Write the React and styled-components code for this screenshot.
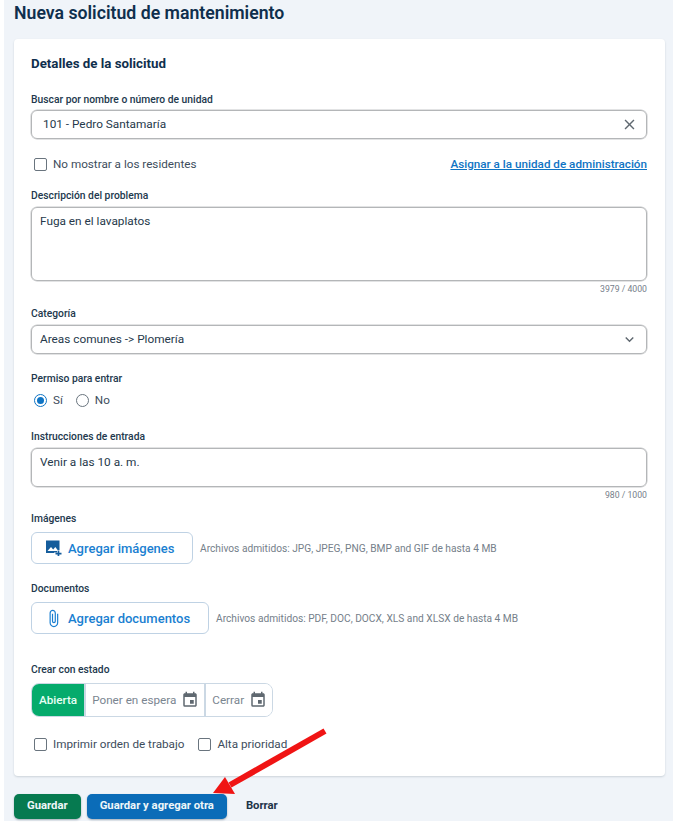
import React from 'react';
import styled, { createGlobalStyle } from 'styled-components';
import { MdAttachFile, MdClose, MdEvent, MdExpandMore } from 'react-icons/md';

const GlobalStyle = createGlobalStyle`
	html, body {
		margin: 0;
		padding: 0;
		background: #fff;
		font-family: Roboto, "Liberation Sans", sans-serif;
	}
`;

const Page = styled.div`
	position: relative;
	box-sizing: border-box;
	width: 673px;
	height: 828px;
	padding-bottom: 7px;
	padding-left: 4px;
	overflow: hidden;
`;
const Surface = styled.main`
	box-sizing: border-box;
	height: 821px;
	padding: 3px 8px 0 10px;
	background: #f0f4f9;
`;
const Title = styled.h1`
	margin: 0;
	height: 20px;
	font-size: 17.7px;
	line-height: 20px;
	font-weight: 600;
	color: #0f2f4d;
`;
const Card = styled.section`
	box-sizing: border-box;
	height: 737px;
	margin-top: 16px;
	padding: 17px 18px 0 17px;
	background: #fff;
	border-radius: 4px;
	box-shadow: 0 1px 2px rgba(40, 60, 80, 0.18);
`;
const CardTitle = styled.h2`
	margin: 0 0 21px;
	height: 16px;
	font-size: 13.3px;
	line-height: 16px;
	font-weight: 700;
	color: #0f2f4d;
`;
const Label = styled.div`
	height: 14px;
	margin-top: ${p => p.$top || 0}px;
	margin-bottom: ${p => p.$bottom ?? 4}px;
	font-size: 10.3px;
	line-height: 14px;
	font-weight: 500;
	color: #22384d;
`;
const InputBox = styled.div`
	box-sizing: border-box;
	display: flex;
	align-items: ${p => (p.$multi ? 'flex-start' : 'center')};
	justify-content: space-between;
	height: ${p => p.$height}px;
	padding: ${p => (p.$multi ? '6px 8px' : `0 8px 1px ${p.$pad || 8}px`)};
	border: 1px solid #b4b6b8;
	border-radius: 6px;
	box-shadow: 0 0 0 0.5px #c6c8ca;
	font-size: 11.8px;
	line-height: 14px;
	color: #26394b;
`;
const Counter = styled.div`
	height: 11px;
	margin-top: 2px;
	text-align: right;
	font-size: 8.7px;
	line-height: 12px;
	color: #76808a;
`;
const OptionsRow = styled.div`
	display: flex;
	align-items: center;
	justify-content: space-between;
	height: 20px;
	margin-top: 15px;
`;
const CheckRow = styled.div`
	display: flex;
	align-items: center;
	gap: 14px;
	height: 20px;
	margin-top: ${p => p.$top || 0}px;
	padding-left: 3px;
`;
const Check = styled.label`
	display: flex;
	align-items: center;
	gap: 6px;
	font-size: 11.7px;
	color: #3d4d5c;
`;
const Box = styled.span`
	box-sizing: border-box;
	width: 13px;
	height: 13px;
	margin-left: ${p => p.$indent || 0}px;
	border: 1px solid #69747e;
	border-radius: 2px;
`;
const AdminLink = styled.a`
	font-size: 11.7px;
	font-weight: 500;
	color: #0f74c4;
	text-decoration: underline;
`;
const RadioRow = styled.div`
	display: flex;
	align-items: center;
	gap: 13px;
	height: 20px;
	padding-left: 3px;
`;
const RadioItem = styled.label`
	display: flex;
	align-items: center;
	gap: 6px;
	font-size: 11.7px;
	color: #3d4d5c;
`;
const Radio = styled.span`
	box-sizing: border-box;
	display: flex;
	align-items: center;
	justify-content: center;
	width: 13px;
	height: 13px;
	border: 1px solid ${p => (p.$on ? '#0f74c4' : '#69747e')};
	border-radius: 50%;
	&::after {
		content: '';
		display: ${p => (p.$on ? 'block' : 'none')};
		width: 7px;
		height: 7px;
		border-radius: 50%;
		background: #0f74c4;
	}
`;
const UploadRow = styled.div`
	display: flex;
	align-items: center;
	gap: 7px;
`;
const UploadButton = styled.button`
	box-sizing: border-box;
	display: flex;
	align-items: center;
	gap: 5px;
	width: ${p => p.$width}px;
	height: 32px;
	padding: 0 0 0 12px;
	background: #fff;
	border: 1px solid #bfd2e4;
	border-radius: 6px;
	font-family: inherit;
	font-size: 13px;
	font-weight: 500;
	color: #1a7fd1;
`;
const IconSlot = styled.span`
	display: flex;
	align-items: center;
	justify-content: center;
	width: 19px;
`;
const UploadHint = styled.span`
	font-size: 10.2px;
	color: #75808a;
`;
const StatusGroup = styled.div`
	display: inline-flex;
	height: 32px;
	border: 1px solid #cbd8e4;
	border-radius: 8px;
	overflow: hidden;
`;
const Status = styled.div`
	box-sizing: border-box;
	display: flex;
	align-items: center;
	gap: 5px;
	height: 100%;
	padding: ${p => (p.$first ? '0 7px' : '0 5px 0 6px')};
	border-left: ${p => (p.$first ? 'none' : '2px solid #cbd8e4')};
	background: ${p => (p.$active ? '#05ab6c' : '#fff')};
	font-size: 11.7px;
	font-weight: ${p => (p.$active ? 500 : 400)};
	color: ${p => (p.$active ? '#e8fff5' : '#7a8590')};
`;
const Actions = styled.div`
	display: flex;
	align-items: center;
	gap: 6px;
	margin-top: 18px;
`;
const ActionButton = styled.button`
	height: 25px;
	padding: 0 13px 2px;
	border: none;
	border-radius: 5px;
	background: ${p => p.$bg};
	box-shadow: 0 1px 2px rgba(20, 40, 60, 0.35);
	font-family: inherit;
	font-size: 11.3px;
	font-weight: 700;
	color: #eef6f8;
`;
const ClearButton = styled.button`
	height: 25px;
	padding: 0 13px 2px;
	border: none;
	background: none;
	font-family: inherit;
	font-size: 11.3px;
	font-weight: 700;
	color: #1d3348;
`;
const ArrowOverlay = styled.svg`
	position: absolute;
	left: 205px;
	top: 722px;
	width: 130px;
	height: 80px;
	pointer-events: none;
`;

const ImagePlusIcon = () => (
	<svg width="16" height="16" viewBox="0 0 16 16" aria-hidden="true">
		<path d="M0 .5h13.5V10h-2.5v2.5H8V13H0z" fill="#155d9c" />
		<path d="M1.5 11 5 7l2.2 2.4L9.3 7l2.7 3.4V11z" fill="#fff" />
		<path d="M11.6 10.6h1.7v2.1h2.2v1.7h-2.2v1.6h-1.7v-1.6H9.5v-1.7h2.1z" fill="#155d9c" />
	</svg>
);

const App = () => {
	return (
		<Page>
			<GlobalStyle />
			<Surface>
				<Title>Nueva solicitud de mantenimiento</Title>
				<Card>
					<CardTitle>Detalles de la solicitud</CardTitle>
					<Label $bottom={3}>Buscar por nombre o número de unidad</Label>
					<InputBox $height={29} $pad={11}>
						<span>101 - Pedro Santamaría</span>
						<MdClose size={17} color="#5f6870" />
					</InputBox>
					<OptionsRow>
						<Check>
							<Box $indent={3} />
							No mostrar a los residentes
						</Check>
						<AdminLink>Asignar a la unidad de administración</AdminLink>
					</OptionsRow>
					<Label $top={15}>Descripción del problema</Label>
					<InputBox $height={74} $multi>Fuga en el lavaplatos</InputBox>
					<Counter>3979 / 4000</Counter>
					<Label $top={13}>Categoría</Label>
					<InputBox $height={29}>
						<span>Areas comunes -&gt; Plomería</span>
						<MdExpandMore size={17} color="#5f6870" />
					</InputBox>
					<Label $top={18}>Permiso para entrar</Label>
					<RadioRow>
						<RadioItem><Radio $on />Sí</RadioItem>
						<RadioItem><Radio />No</RadioItem>
					</RadioRow>
					<Label $top={20}>Instrucciones de entrada</Label>
					<InputBox $height={39} $multi>Venir a las 10 a. m.</InputBox>
					<Counter>980 / 1000</Counter>
					<Label $top={12} $bottom={6}>Imágenes</Label>
					<UploadRow>
						<UploadButton $width={162}>
							<IconSlot><ImagePlusIcon /></IconSlot>
							Agregar imágenes
						</UploadButton>
						<UploadHint>Archivos admitidos: JPG, JPEG, PNG, BMP and GIF de hasta 4 MB</UploadHint>
					</UploadRow>
					<Label $top={18} $bottom={6}>Documentos</Label>
					<UploadRow>
						<UploadButton $width={178}>
							<IconSlot><MdAttachFile size={19} color="#1a7fd1" /></IconSlot>
							Agregar documentos
						</UploadButton>
						<UploadHint>Archivos admitidos: PDF, DOC, DOCX, XLS and XLSX de hasta 4 MB</UploadHint>
					</UploadRow>
					<Label $top={29} $bottom={6}>Crear con estado</Label>
					<StatusGroup>
						<Status $first $active>Abierta</Status>
						<Status>Poner en espera<MdEvent size={18} color="#5f6870" /></Status>
						<Status>Cerrar<MdEvent size={18} color="#5f6870" /></Status>
					</StatusGroup>
					<CheckRow $top={17}>
						<Check><Box />Imprimir orden de trabajo</Check>
						<Check><Box />Alta prioridad</Check>
					</CheckRow>
				</Card>
				<Actions>
					<ActionButton $bg="#067a50">Guardar</ActionButton>
					<ActionButton $bg="#0b6cb8">Guardar y agregar otra</ActionButton>
					<ClearButton>Borrar</ClearButton>
				</Actions>
			</Surface>
			<ArrowOverlay viewBox="0 0 130 80">
				<path d="M120 9 25 63" stroke="#f01414" strokeWidth="6" fill="none" />
				<path d="M8 71 20 55 30 72z" fill="#f01414" />
			</ArrowOverlay>
		</Page>
	);
};

export default App;
